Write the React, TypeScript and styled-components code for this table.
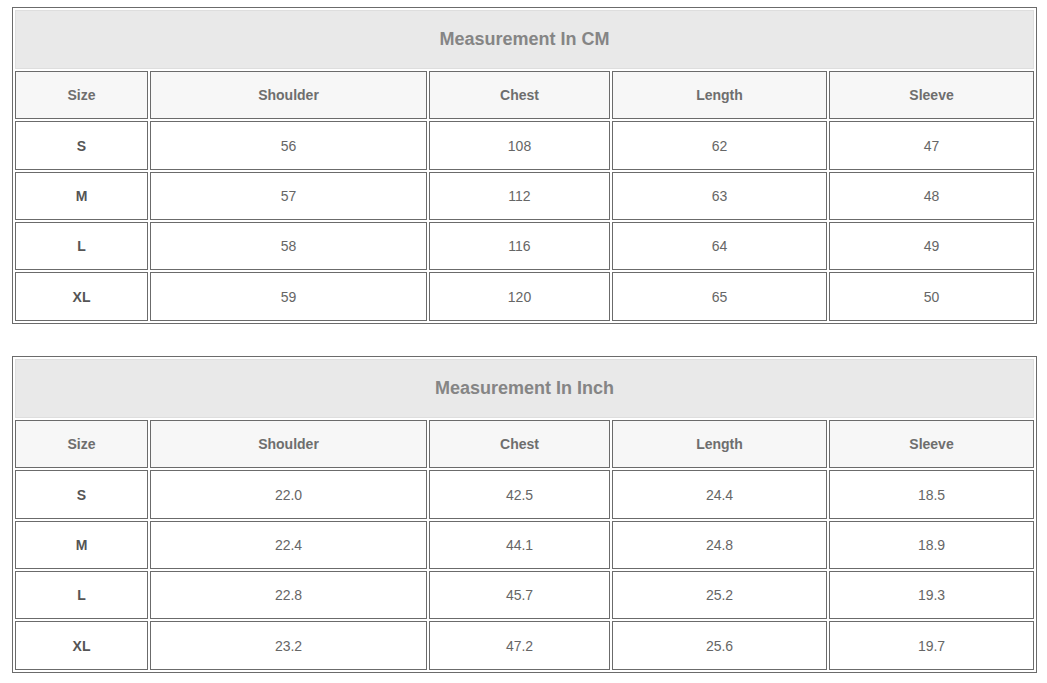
import React from "react";
import styled, { createGlobalStyle } from "styled-components";

const GlobalStyle = createGlobalStyle`
  html, body { margin: 0; padding: 0; background: #ffffff; }
  body { font-family: "Liberation Sans", Arial, sans-serif; }
`;

const Page = styled.div`
  padding: 7px 0 0 12px;
  display: flex;
  flex-direction: column;
  gap: 32px;
`;

const Table = styled.table`
  width: 1025px;
  border: 1px solid #6b6b6b;
  border-collapse: separate;
  border-spacing: 2px;
  table-layout: fixed;
  box-sizing: border-box;
`;

const TitleCell = styled.th`
  height: 59px;
  box-sizing: border-box;
  padding: 0;
  background: #e9e9e9;
  border: 1px solid #dedede;
  color: #858585;
  font-size: 18px;
  font-weight: bold;
  text-align: center;
  vertical-align: middle;
`;

const HeadCell = styled.th`
  height: 48px;
  box-sizing: border-box;
  padding: 0;
  background: #f7f7f7;
  border: 1px solid #6b6b6b;
  color: #6e6e6e;
  font-size: 14px;
  font-weight: bold;
  text-align: center;
  vertical-align: middle;
`;

const Cell = styled.td<{ $bold?: boolean; $tall?: boolean }>`
  height: ${(p) => (p.$tall ? "49px" : "48px")};
  box-sizing: border-box;
  padding: 0;
  background: #ffffff;
  border: 1px solid #6b6b6b;
  color: ${(p) => (p.$bold ? "#555555" : "#666666")};
  font-size: 14px;
  font-weight: ${(p) => (p.$bold ? "bold" : "normal")};
  text-align: center;
  vertical-align: middle;
`;

const widths = [133, 277, 181, 215, 205];
const headers = ["Size", "Shoulder", "Chest", "Length", "Sleeve"];

type Row = [string, string, string, string, string];

const cmRows: Row[] = [
  ["S", "56", "108", "62", "47"],
  ["M", "57", "112", "63", "48"],
  ["L", "58", "116", "64", "49"],
  ["XL", "59", "120", "65", "50"],
];

const inchRows: Row[] = [
  ["S", "22.0", "42.5", "24.4", "18.5"],
  ["M", "22.4", "44.1", "24.8", "18.9"],
  ["L", "22.8", "45.7", "25.2", "19.3"],
  ["XL", "23.2", "47.2", "25.6", "19.7"],
];

function SizeTable({ title, rows }: { title: string; rows: Row[] }) {
  return (
    <Table>
      <colgroup>
        {widths.map((w, i) => (
          <col key={i} style={{ width: w }} />
        ))}
      </colgroup>
      <thead>
        <tr>
          <TitleCell colSpan={5}>{title}</TitleCell>
        </tr>
        <tr>
          {headers.map((h) => (
            <HeadCell key={h}>{h}</HeadCell>
          ))}
        </tr>
      </thead>
      <tbody>
        {rows.map((r, ri) => (
          <tr key={ri}>
            {r.map((v, i) => (
              <Cell key={i} $bold={i === 0} $tall={ri === 0 || ri === 3}>
                {v}
              </Cell>
            ))}
          </tr>
        ))}
      </tbody>
    </Table>
  );
}

export default function App() {
  return (
    <>
      <GlobalStyle />
      <Page>
        <SizeTable title="Measurement In CM" rows={cmRows} />
        <SizeTable title="Measurement In Inch" rows={inchRows} />
      </Page>
    </>
  );
}
